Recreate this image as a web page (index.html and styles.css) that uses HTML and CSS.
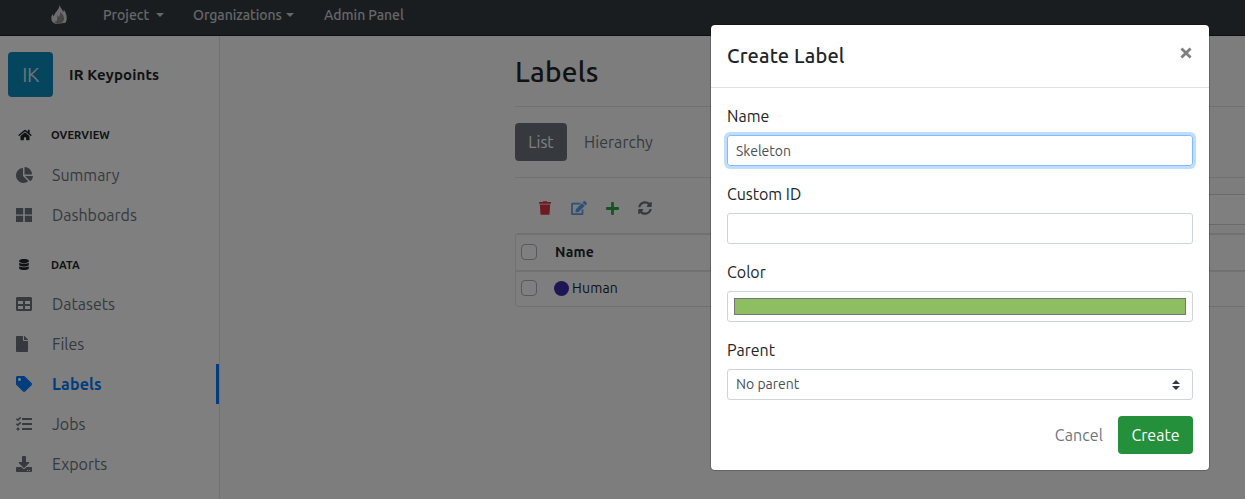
FILE: index.html
```html
<!DOCTYPE html>
<html lang="en">
<head>
<meta charset="utf-8">
<title>Labels</title>
<link rel="stylesheet" href="styles.css">
</head>
<body>
<nav class="navbar">
  <svg class="logo" viewBox="0 0 16 20"><path fill="#d8d8d8" d="M8.600 0c.2 2 2.600 4 3.600 7 .5-.8.700-1.500.6-2.500 2 2.800 3.200 6 2.900 9.500-.1 1.500-.5 2.800-1.200 3.800L5.500 19C2 18.500 .2 16 .3 13c.1-1.600.7-2.700 1.600-3.900.1 1 .3 1.600.9 2.200.4-1.900 1.500-3.300 2.800-5C7 4.400 8.400 2.600 8.600 0z"/><path fill="#8a8a8a" d="M9.200 5.500c.1 2.600 3.900 4.300 3.900 8 0 3-2.500 5.300-6.600 5.500-1.500-.4-2.800-1.600-3-3.200 1 .9 2.300.7 2.600-.5.500-2.200-.3-3.300.6-5.300.4 1 .8 1.600 1.300 2C9.200 10 9.600 8 9.200 5.500z"/></svg>
  <a class="nav-link nav-project">Project<i class="caret"></i></a>
  <a class="nav-link nav-orgs">Organizations<i class="caret"></i></a>
  <a class="nav-link nav-admin">Admin Panel</a>
</nav>
<div class="layout">
  <aside class="sidebar">
    <div class="project"><span class="avatar">IK</span><strong class="project-name">IR Keypoints</strong></div>
    <h6 class="group"><svg class="group-icon" viewBox="0 0 576 512"><path d="M280.37 148.26L96 300.11V464a16 16 0 0 0 16 16l112.06-.29a16 16 0 0 0 15.92-16V368a16 16 0 0 1 16-16h64a16 16 0 0 1 16 16v95.64a16 16 0 0 0 16 16.05L464 480a16 16 0 0 0 16-16V300L295.67 148.26a12.19 12.19 0 0 0-15.3 0zM571.6 251.47L488 182.56V44.05a12 12 0 0 0-12-12h-56a12 12 0 0 0-12 12v72.61L318.47 43a48 48 0 0 0-61 0L4.34 251.47a12 12 0 0 0-1.6 16.9l25.5 31A12 12 0 0 0 45.15 301l235.22-193.74a12.19 12.19 0 0 1 15.3 0L530.9 301a12 12 0 0 0 16.9-1.6l25.500-31a12 12 0 0 0-1.700-16.930z"/></svg><span>OVERVIEW</span></h6>
    <a class="item"><svg class="item-icon wide" viewBox="0 0 544 512"><path d="M527.79 288H290.5l158.03 158.03c6.04 6.04 15.98 6.53 22.19.68 38.7-36.46 65.32-85.61 73.13-140.86 1.34-9.46-6.51-17.85-16.06-17.85zm-15.83-64.8C503.72 103.74 408.26 8.28 288.8.04 279.68-.59 272 7.1 272 16.24V240h223.77c9.14 0 16.82-7.68 16.19-16.8zM224 288V50.71c0-9.55-8.39-17.4-17.84-16.06C86.99 51.49-4.1 155.6.14 280.37 4.5 408.51 114.83 513.59 243.03 511.98c50.4-.63 96.97-16.87 135.26-44.03 7.9-5.6 8.42-17.23 1.57-24.08L224 288z"/></svg><span>Summary</span></a>
    <a class="item"><svg class="item-icon" viewBox="0 0 16 16"><path d="M.5 1h6.700v6.500H0v-6A.5.5 0 0 1 .5 1zM8.800 1h6.700a.5.5 0 0 1 .5.5v6H8.800zM0 8.800h7.200V15H.5a.5.5 0 0 1-.5-.5zM8.800 8.800H16v5.700a.5.5 0 0 1-.5.5H8.800z"/></svg><span>Dashboards</span></a>
    <h6 class="group group-data"><svg class="group-icon database" viewBox="0 0 448 512"><path d="M448 73.143v45.714C448 159.143 347.667 192 224 192S0 159.143 0 118.857V73.143C0 32.857 100.333 0 224 0s224 32.857 224 73.143zM448 176v102.857C448 319.143 347.667 352 224 352S0 319.143 0 278.857V176c48.125 33.143 136.208 48.572 224 48.572S399.874 209.143 448 176zm0 160v102.857C448 479.143 347.667 512 224 512S0 479.143 0 438.857V336c48.125 33.143 136.208 48.572 224 48.572S399.874 369.143 448 336z"/></svg><span>DATA</span></h6>
    <a class="item"><svg class="item-icon" viewBox="0 0 512 512"><path d="M464 32H48C21.490 32 0 53.490 0 80v352c0 26.510 21.490 48 48 48h416c26.510 0 48-21.490 48-48V80c0-26.510-21.490-48-48-48zM224 416H64v-96h160v96zm0-160H64v-96h160v96zm224 160H288v-96h160v96zm0-160H288v-96h160v96z"/></svg><span>Datasets</span></a>
    <a class="item"><svg class="item-icon narrow" viewBox="0 0 384 512"><path d="M224 136V0H24C10.700 0 0 10.700 0 24v464c0 13.300 10.700 24 24 24h336c13.300 0 24-10.700 24-24V160H248c-13.200 0-24-10.800-24-24zm160-14.100v6.100H256V0h6.100c6.400 0 12.500 2.500 17 7l97.900 98c4.500 4.500 7 10.600 7 16.900z"/></svg><span>Files</span></a>
    <a class="item active"><svg class="item-icon" viewBox="0 0 512 512"><path d="M0 252.118V48C0 21.490 21.490 0 48 0h204.118a48 48 0 0 1 33.941 14.059l211.882 211.882c18.744 18.745 18.744 49.137 0 67.882L293.823 497.941c-18.745 18.744-49.137 18.744-67.882 0L14.059 286.059A48 48 0 0 1 0 252.118zM112 64c-26.510 0-48 21.490-48 48s21.490 48 48 48 48-21.490 48-48-21.490-48-48-48z"/></svg><span>Labels</span></a>
    <a class="item"><svg class="item-icon" viewBox="0 0 512 512"><path d="M139.610 35.500a12 12 0 0 0-17 0L58.930 98.810l-22.700-22.120a12 12 0 0 0-17 0L3.530 92.410a12 12 0 0 0 0 17l47.590 47.400a12.780 12.780 0 0 0 17.610 0l15.590-15.620L156.520 69a12.090 12.090 0 0 0 .09-17zm0 159.190a12 12 0 0 0-17 0l-63.680 63.720-22.700-22.100a12 12 0 0 0-17 0L3.530 252a12 12 0 0 0 0 17L51 316.500a12.770 12.770 0 0 0 17.600 0l15.700-15.690 72.200-72.220a12 12 0 0 0 .09-16.900zM64 368c-26.490 0-48.590 21.500-48.590 48S37.530 464 64 464a48 48 0 0 0 0-96zm432 16H208a16 16 0 0 0-16 16v32a16 16 0 0 0 16 16h288a16 16 0 0 0 16-16v-32a16 16 0 0 0-16-16zm0-320H208a16 16 0 0 0-16 16v32a16 16 0 0 0 16 16h288a16 16 0 0 0 16-16V80a16 16 0 0 0-16-16zm0 160H208a16 16 0 0 0-16 16v32a16 16 0 0 0 16 16h288a16 16 0 0 0 16-16v-32a16 16 0 0 0-16-16z"/></svg><span>Jobs</span></a>
    <a class="item"><svg class="item-icon" viewBox="0 0 512 512"><path d="M216 0h80c13.300 0 24 10.700 24 24v168h87.700c17.800 0 26.700 21.500 14.100 34.100L269.700 378.300c-7.500 7.500-19.800 7.500-27.300 0L90.100 226.100c-12.600-12.600-3.700-34.100 14.100-34.100H192V24c0-13.300 10.700-24 24-24zm296 376v112c0 13.300-10.700 24-24 24H24c-13.300 0-24-10.700-24-24V376c0-13.300 10.700-24 24-24h146.700l49 49c20.100 20.100 52.500 20.100 72.600 0l49-49H488c13.300 0 24 10.700 24 24zm-124 88c0-11-9-20-20-20s-20 9-20 20 9 20 20 20 20-9 20-20zm64 0c0-11-9-20-20-20s-20 9-20 20 9 20 20 20 20-9 20-20z"/></svg><span>Exports</span></a>
  </aside>
  <main class="content">
    <h1 class="page-title">Labels</h1>
    <div class="tabs"><a class="tab tab-active">List</a><a class="tab tab-plain">Hierarchy</a></div>
    <div class="toolbar">
      <svg class="tool trash" viewBox="0 0 448 512"><path d="M432 32H312l-9.400-18.700A24 24 0 0 0 281.100 0H166.800a23.720 23.720 0 0 0-21.400 13.300L136 32H16A16 16 0 0 0 0 48v32a16 16 0 0 0 16 16h416a16 16 0 0 0 16-16V48a16 16 0 0 0-16-16zM53.200 467a48 48 0 0 0 47.900 45h245.800a48 48 0 0 0 47.900-45L416 128H32z"/></svg>
      <svg class="tool edit" viewBox="0 0 576 512"><path d="M402.600 83.200l90.200 90.200c3.800 3.800 3.800 10 0 13.800L274.400 405.600l-92.800 10.300c-12.400 1.400-22.900-9.100-21.500-21.500l10.300-92.800L388.800 83.200c3.800-3.800 10-3.800 13.800 0zm162-22.900l-48.800-48.800c-15.200-15.200-39.900-15.200-55.200 0l-35.400 35.400c-3.800 3.800-3.800 10 0 13.800l90.200 90.200c3.800 3.800 10 3.800 13.800 0l35.400-35.400c15.200-15.300 15.200-40 0-55.200zM384 346.200V448H64V128h229.800c3.200 0 6.200-1.300 8.500-3.500l40-40c7.600-7.600 2.200-20.500-8.500-20.500H48C21.500 64 0 85.500 0 112v352c0 26.500 21.500 48 48 48h352c26.500 0 48-21.500 48-48V306.200c0-10.700-12.900-16-20.500-8.500l-40 40c-2.200 2.300-3.500 5.300-3.500 8.500z"/></svg>
      <svg class="tool plus" viewBox="0 0 448 512"><path d="M416 208H272V64c0-17.670-14.330-32-32-32h-32c-17.670 0-32 14.330-32 32v144H32c-17.670 0-32 14.330-32 32v32c0 17.670 14.330 32 32 32h144v144c0 17.670 14.330 32 32 32h32c17.670 0 32-14.330 32-32V304h144c17.670 0 32-14.330 32-32v-32c0-17.670-14.330-32-32-32z"/></svg>
      <svg class="tool sync" viewBox="0 0 512 512"><path d="M370.720 133.280C339.458 104.008 298.888 87.962 255.848 88c-77.458.068-144.328 53.178-162.791 126.850-1.344 5.363-6.122 9.150-11.651 9.150H24.103c-7.498 0-13.194-6.807-11.807-14.176C33.933 94.924 134.813 8 256 8c66.448 0 126.791 26.136 171.315 68.685L463.030 40.970C478.149 25.851 504 36.559 504 57.941V192c0 13.255-10.745 24-24 24H345.941c-21.382 0-32.090-25.851-16.971-40.971l41.750-41.749zM32 296h134.059c21.382 0 32.090 25.851 16.971 40.971l-41.750 41.750c31.262 29.273 71.835 45.319 114.876 45.280 77.418-.07 144.315-53.144 162.787-126.849 1.344-5.363 6.122-9.150 11.651-9.150h57.304c7.498 0 13.194 6.807 11.807 14.176C478.067 417.076 377.187 504 256 504c-66.448 0-126.791-26.136-171.315-68.685L48.970 471.030C33.851 486.149 8 475.441 8 454.059V320c0-13.255 10.745-24 24-24z"/></svg>
      <span class="search"></span>
    </div>
    <div class="table">
      <div class="row head"><i class="check"></i><span>Name</span></div>
      <div class="row"><i class="check"></i><i class="dot"></i><span class="label-name">Human</span></div>
    </div>
  </main>
</div>
<div class="backdrop"></div>
<section class="modal">
  <header class="modal-header"><h5 class="modal-title">Create Label</h5><svg class="close" viewBox="0 0 10 10"><path d="M1.200 1.200l7.600 7.600M8.800 1.200l-7.600 7.600"/></svg></header>
  <div class="modal-body">
    <label class="label">Name</label>
    <div class="field focused"><span>Skeleton</span></div>
    <label class="label">Custom ID</label>
    <div class="field"></div>
    <label class="label">Color</label>
    <div class="field color"><span class="swatch"></span></div>
    <label class="label">Parent</label>
    <div class="field select"><span>No parent</span><svg class="sort" viewBox="0 0 4 5"><path d="M2 0L0 2h4zm0 5L0 3h4z"/></svg></div>
    <div class="actions"><a class="cancel">Cancel</a><a class="create">Create</a></div>
  </div>
</section>
</body>
</html>
```
FILE: styles.css
```css
* { box-sizing: border-box; }
body { margin: 0; width: 1245px; height: 499px; overflow: hidden; position: relative; background: #fafafa; color: #212529; font: 16px/24px Ubuntu, "Noto Sans", sans-serif; }
h1, h5, h6 { margin: 0; }
.navbar { height: 36px; background: #343a40; border-bottom: 1px solid #1c1f22; display: flex; align-items: center; padding: 0 0 5px 51px; }
.logo { width: 16px; height: 20px; margin-right: 36px; }
.nav-link { display: flex; align-items: center; color: #ccced0; font-size: 14px; font-weight: 500; line-height: 20px; white-space: nowrap; }
.nav-project { width: 90px; }
.nav-orgs { width: 131px; letter-spacing: -.05px; }
.nav-admin { letter-spacing: -.05px; }
.caret { border: 4px solid transparent; border-top-color: #ccced0; border-bottom: 0; margin: -1px 0 0 7px; }
.nav-orgs .caret { margin-left: 4px; }
.layout { display: flex; height: 463px; }
.sidebar { width: 220px; flex: none; background: #fff; border-right: 1px solid #dee2e6; padding-top: 16px; }
.project { display: flex; align-items: center; padding-left: 8px; }
.avatar { width: 45px; height: 45px; border-radius: 4px; background: #0b8cbc; color: #dfe8ee; font-size: 20px; line-height: 20px; display: flex; align-items: center; justify-content: center; margin-right: 16px; letter-spacing: -.5px; }
.project-name { font-size: 15px; font-weight: 700; letter-spacing: .15px; }
.group { display: flex; align-items: center; height: 58px; padding: 18px 0 0 16px; font-size: 11px; font-weight: 700; line-height: 16px; letter-spacing: .15px; }
.group-data { height: 49px; padding-top: 10px; }
.group-icon { width: 18px; height: 12px; margin-right: 17px; fill: #212529; }
.database { width: 16px; height: 11px; margin-right: 19px; }
.item { display: flex; align-items: center; height: 40px; padding-left: 16px; color: #6c757d; }
.item-icon { width: 16px; height: 16px; margin-right: 20px; fill: currentColor; }
.wide { width: 17px; margin-right: 19px; }
.narrow { width: 12px; margin-right: 24px; }
.active { color: #007bff; font-weight: 700; letter-spacing: .15px; border-right: 3px solid #007bff; }
.content { flex: 1; min-width: 0; margin-left: 295px; }
.page-title { font-size: 28px; font-weight: 500; line-height: 34px; letter-spacing: .2px; padding: 19px 0 17px; height: 71px; border-bottom: 1px solid #e2e2e2; }
.tabs { display: flex; height: 71px; padding-top: 16px; border-bottom: 1px solid #e2e2e2; }
.tab { height: 38px; line-height: 39px; color: #6c757d; }
.tab-plain { letter-spacing: .05px; }
.tab-active { width: 52px; border-radius: 4px; background: #6c757d; color: #fff; text-align: center; margin-right: 17px; }
.toolbar { display: flex; align-items: center; height: 55px; padding: 5px 0 0 24px; }
.tool { height: 14px; flex: none; }
.trash { width: 12px; fill: #dc3545; margin-right: 20px; }
.edit { width: 16px; fill: #5aa0f0; margin-right: 19px; }
.plus { width: 13px; height: 15px; fill: #28a745; margin-right: 19px; }
.sync { width: 14px; fill: #6c757d; }
.search { align-self: flex-start; flex: 1; height: 31px; margin: 11px 0 0 200px; border: 1px solid #ced4da; border-right: 0; background: #fff; }
.table { border: 1px solid #dee2e6; border-right: 0; border-radius: 4px 0 0 4px; background: #fdfdfd; height: 74px; font-size: 14px; }
.row { display: flex; align-items: center; height: 34px; padding: 0 0 2px 5px; }
.head { height: 38px; padding-bottom: 1px; font-weight: 700; letter-spacing: .2px; border-top: 1px solid #dee2e6; border-bottom: 2px solid #dee2e6; }
.check { width: 16px; height: 16px; border: 1px solid #adb5bd; border-radius: 4px; background: #fff; margin-right: 17px; }
.head .check { margin-right: 18px; }
.dot { width: 15px; height: 15px; border-radius: 50%; background: #3d2ba8; margin-right: 3px; }
.label-name { letter-spacing: .2px; }
.backdrop { position: absolute; inset: 0; background: rgba(0,0,0,.5); }
.modal { position: absolute; left: 710px; top: 24px; width: 500px; height: 447px; border: 1px solid rgba(0,0,0,.2); border-radius: 5px; background: #fff; background-clip: padding-box; }
.modal-header { display: flex; justify-content: space-between; height: 63px; padding: 16px; border-bottom: 1px solid #dee2e6; }
.modal-title { font-size: 20px; font-weight: 500; line-height: 30px; letter-spacing: .15px; }
.close { width: 12px; height: 12px; margin: 6px 1px 0 0; fill: none; stroke: #7f7f7f; stroke-width: 2.300; }
.modal-body { padding: 16px; }
.label { display: block; height: 23px; line-height: 25px; margin-bottom: 8px; }
.field { height: 31px; border: 1px solid #ced4da; border-radius: 3px; margin-bottom: 16px; padding: 0 8px; display: flex; align-items: center; font-size: 14px; color: #495057; }
.focused { border-color: #80bdff; box-shadow: 0 0 0 3px rgba(0,123,255,.25); }
.color { padding: 0 6px; }
.swatch { flex: 1; height: 17px; background: #8dbe62; border: 1px solid #767676; }
.select { justify-content: space-between; padding-bottom: 1px; }
.sort { width: 8px; height: 10px; fill: #343a40; margin: 1px 4px 0 0; }
.actions { display: flex; justify-content: flex-end; align-items: center; height: 38px; }
.cancel { color: #6c757d; margin-right: 15px; letter-spacing: .1px; }
.create { width: 75px; height: 38px; line-height: 39px; text-align: center; color: #fff; background: #24903b; border-radius: 4px; }
```
